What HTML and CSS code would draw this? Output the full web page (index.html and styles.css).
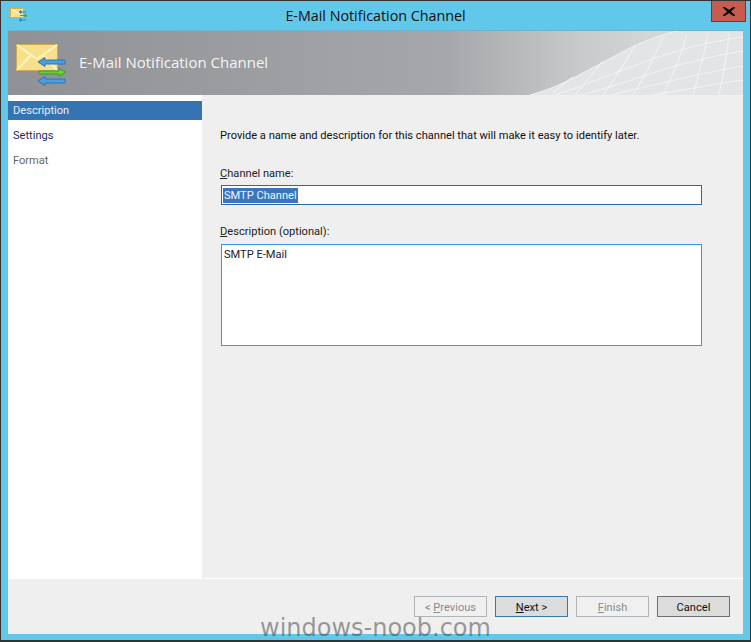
FILE: index.html
```html
<!DOCTYPE html>
<html lang="en">
<head>
<meta charset="utf-8">
<title>E-Mail Notification Channel</title>
<link rel="stylesheet" href="styles.css">
</head>
<body>
<div class="window">
  <div class="titlebar">
    <svg class="app-icon" width="17" height="16" viewBox="0 0 17 16">
      <rect x="0.5" y="0.5" width="13" height="9" fill="#f8e08a" stroke="#d9ac4a"/>
      <path d="M1 1l6 4 6-4M1 9l4-4M13 9l-4-4" fill="none" stroke="#fff6c8"/>
      <path d="M16 4H11M11 2.5L9 4l2 1.500z" stroke="#2f86c8" fill="#2f86c8"/>
      <path d="M10 7.500H15M15 6l2 1.500L15 9z" stroke="#43b02a" fill="#43b02a"/>
      <path d="M16 12H11M11 10.500L9 12l2 1.500z" stroke="#2f86c8" fill="#2f86c8"/>
    </svg>
    <div class="title">E-Mail Notification Channel</div>
    <div class="close"><svg width="12" height="9" viewBox="0 0 12 9"><path d="M2 0.500L6 3.300 10 0.500H12L7.500 4.500 12 8.500H10L6 5.700 2 8.500H0L4.500 4.500 0 0.500z" fill="#000" stroke="#000" stroke-width="0.6"/></svg></div>
  </div>
  <div class="client">
    <header class="banner">
      <svg class="mesh" width="240" height="64" viewBox="0 0 240 64">
        <path d="M27 64C80 50 120 12 174 0H240V64z" fill="#e3e4e5"/>
        <g fill="none" stroke="#f6f6f6" stroke-width="1.100" stroke-opacity="0.75">
          <path d="M27 64C80 50 120 12 174 0"/>
          <path d="M52 64C100 50 160 16 240 6"/>
          <path d="M78 64C125 52 175 30 240 20"/>
          <path d="M108 64C145 56 195 42 240 35"/>
          <path d="M150 64C175 60 205 54 240 49"/>
          <path d="M50 62C56 56 62 52 70 46"/>
          <path d="M72 64C80 54 90 42 100 30"/>
          <path d="M100 64C110 50 122 32 132 14"/>
          <path d="M130 64C140 48 152 26 160 6"/>
          <path d="M160 64C168 48 178 24 184 4"/>
          <path d="M190 64C195 46 201 26 205 2"/>
          <path d="M216 64C220 46 224 26 226 2"/>
        </g>
      </svg>
      <svg class="banner-icon" width="50" height="42" viewBox="0 0 50 42">
        <rect x="0.500" y="0.500" width="41" height="26" fill="#f7e08c" stroke="#d2a850"/>
        <path d="M1 1L21 15 41 1M1 26L15 11M41 26L27 11" fill="none" stroke="#fff3bd" stroke-width="2"/>
        <path d="M49 16H29V13.500L22 18 29 22.500V20H49z" fill="#4d9fdc" stroke="#2a74b8"/>
        <path d="M23 27H43V24.500L50 28 43 32.500V30H23z" fill="#62cf3e" stroke="#3f9c27"/>
        <path d="M49 35H29V32.500L22 37 29 41.500V39H49z" fill="#4d9fdc" stroke="#2a74b8"/>
      </svg>
      <h1 class="banner-title">E-Mail Notification Channel</h1>
    </header>
    <div class="body">
      <nav class="steps">
        <div class="step step-active">Description</div>
        <div class="step">Settings</div>
        <div class="step step-off">Format</div>
      </nav>
      <main class="content">
        <p class="intro">Provide a name and description for this channel that will make it easy to identify later.</p>
        <label class="label"><u>C</u>hannel name:</label>
        <div class="input"><span class="selected">SMTP Channel</span></div>
        <label class="label label-desc"><u>D</u>escription (optional):</label>
        <div class="textarea">SMTP E-Mail</div>
      </main>
    </div>
    <footer class="footer">
      <div class="btn btn-off"><span>&lt; <u>P</u>revious</span></div>
      <div class="btn btn-next"><span><u>N</u>ext &gt;</span></div>
      <div class="btn btn-off"><span><u>F</u>inish</span></div>
      <div class="btn btn-cancel"><span>Cancel</span></div>
    </footer>
  </div>
  <div class="watermark">windows-noob.com</div>
</div>
</body>
</html>
```
FILE: styles.css
```css
* { box-sizing: border-box; }
html, body { margin: 0; padding: 0; }
body { width: 751px; height: 642px; overflow: hidden; font-family: "Roboto", "Liberation Sans", sans-serif; font-size: 11.100px; color: #000; }
.window { position: relative; width: 751px; height: 642px; background: #62c8ea; border: 1px solid #333; border-bottom: 2px solid #333; display: flex; flex-direction: column; overflow: hidden; }
.titlebar { position: relative; height: 30px; flex: none; display: flex; justify-content: center; padding-top: 5px; }
.app-icon { position: absolute; left: 9px; top: 7px; }
.title { font-family: "Open Sans", sans-serif; font-size: 14.300px; line-height: 20px; color: #111; }
.close { position: absolute; left: 710px; top: -1px; width: 35px; height: 22px; background: #c75b50; border: 1px solid #6e3a36; display: flex; align-items: center; justify-content: center; }
.client { width: 735px; height: 603px; margin-left: 7px; background: #efefef; display: flex; flex-direction: column; box-shadow: 0 -1px 0 #6db3d2; }
.banner { position: relative; height: 64px; flex: none; display: flex; align-items: center; background: linear-gradient(90deg, #8f9194 0, #a5a7aa 60%, #c9cacc 78%, #e4e5e6 100%); }
.mesh { position: absolute; right: 0; top: 0; }
.banner-icon { position: relative; margin-left: 8px; margin-top: 4px; }
.banner-title { position: relative; margin: -2px 0 0 13px; font-family: "Open Sans", sans-serif; font-weight: 400; font-size: 15px; color: #f4f4f4; }
.body { flex: none; height: 484px; display: flex; }
.steps { width: 194px; background: #fff; padding-top: 6px; }
.step { height: 19px; line-height: 19px; padding-left: 5px; margin-bottom: 6px; color: #1c2a5c; }
.step-active { background: #3673b2; color: #e8f0f8; }
.step-off { color: #666; }
.content { flex: 1; padding: 33px 41px 0 17px; border-bottom: 1px solid #fff; margin-left: 2px; }
.intro { margin: 0 0 0 -1px; line-height: 15px; color: #111; }
.label { display: block; margin-top: 23px; margin-left: -1px; line-height: 15px; color: #222; }
.label-desc { margin-top: 19px; }
.input { margin-top: 4px; height: 20px; background: #fff; border: 1px solid #2b6a9c; padding: 2px 1px; line-height: 15px; }
.selected { display: inline-block; height: 15px; background: #3a76c0; color: #eef4fb; padding: 0 1px; }
.textarea { margin-top: 5px; height: 102px; background: #fff; border: 1px solid #2d9fd8; padding: 2px; line-height: 15px; color: #222; }
.footer { flex: 1; display: flex; justify-content: flex-end; gap: 8px; padding: 17px 13px 0 0; }
.btn { width: 73px; height: 21px; display: flex; align-items: center; justify-content: center; padding-top: 1px; background: #dcdcdc; border: 1px solid #6f6f6f; color: #111; }
.btn-off { background: #f0f0f0; border-color: #b0b4b4; color: #8a8a8a; }
.btn-next { border-color: #3a76a8; }
.watermark { position: absolute; left: 259px; top: 610px; font-family: "DejaVu Sans", sans-serif; font-size: 24px; line-height: 34px; color: rgba(60,60,60,0.5); white-space: nowrap; }
```
